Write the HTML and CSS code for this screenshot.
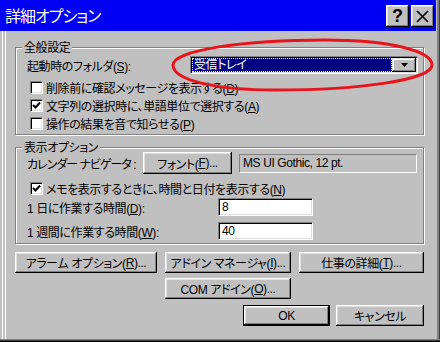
FILE: index.html
```html
<!DOCTYPE html>
<html lang="ja">
<head>
<meta charset="utf-8">
<title>詳細オプション</title>
<link rel="stylesheet" href="styles.css">
</head>
<body>
<div class="window">
  <div class="titlebar">
    <span class="title">詳細オプション</span>
    <div class="tb-buttons">
      <span class="tb-btn help">?</span>
      <span class="tb-btn close"><svg width="13" height="13" viewBox="0 0 13 13"><path d="M1 1 L12 12 M12 1 L1 12" stroke="#000" stroke-width="1.7" fill="none"/></svg></span>
    </div>
  </div>
  <div class="content">
    <div class="group g1">
      <span class="legend">全般設定</span>
      <div class="row folder-row">
        <span class="label w-folder">起動時のフォルダ(<u>S</u>):</span>
        <div class="combo">
          <div class="combo-value"><span class="sel">受信トレイ</span></div>
          <div class="combo-btn"><svg width="7" height="4" viewBox="0 0 7 4"><path d="M0 0 H7 L3.5 4 Z" fill="#000"/></svg></div>
        </div>
      </div>
      <div class="check-row first">
        <span class="cb"></span><span>削除前に確認メッセージを表示する(<u>D</u>)</span>
      </div>
      <div class="check-row">
        <span class="cb"><svg width="9" height="9" viewBox="0 0 9 9"><path d="M1 4 L3.5 6.5 L8 1.5" stroke="#000" stroke-width="2" fill="none"/></svg></span><span>文字列の選択時に、単語単位で選択する(<u>A</u>)</span>
      </div>
      <div class="check-row">
        <span class="cb"></span><span>操作の結果を音で知らせる(<u>P</u>)</span>
      </div>
    </div>

    <div class="group g2">
      <span class="legend">表示オプション</span>
      <div class="row font-row">
        <span class="label w-cal">カレンダー ナビゲータ :</span>
        <span class="btn font-btn">フォント(<u>F</u>)...</span>
        <span class="static-field">MS UI Gothic, 12 pt.</span>
      </div>
      <div class="check-row memo-row">
        <span class="cb"><svg width="9" height="9" viewBox="0 0 9 9"><path d="M1 4 L3.5 6.5 L8 1.5" stroke="#000" stroke-width="2" fill="none"/></svg></span><span>メモを表示するときに、時間と日付を表示する(<u>N</u>)</span>
      </div>
      <div class="row input-row day-row">
        <span class="label w-input">1 日に作業する時間(<u>D</u>):</span>
        <span class="textbox">8</span>
      </div>
      <div class="row input-row week-row">
        <span class="label w-input">1 週間に作業する時間(<u>W</u>):</span>
        <span class="textbox">40</span>
      </div>
    </div>

    <div class="btn-grid">
      <span class="btn">アラーム オプション(<u>R</u>)...</span>
      <span class="btn">アドイン マネージャ(<u>I</u>)...</span>
      <span class="btn">仕事の詳細(<u>T</u>)...</span>
      <span class="btn com-btn">COM アドイン(<u>O</u>)...</span>
    </div>

    <div class="dialog-actions">
      <span class="btn default-btn">OK</span>
      <span class="btn cancel-btn">キャンセル</span>
    </div>
  </div>
  <svg class="annotation" width="440" height="342" viewBox="0 0 440 342">
    <path d="M173 65 C173 50 245 40 325 40 C390 40 432 51 432 65 C432 80 360 90 275 90 C215 90 173 80 173 65 Z" fill="none" stroke="#e8141c" stroke-width="3"/>
  </svg>
</div>
</body>
</html>
```

FILE: styles.css
```css
* { box-sizing: border-box; }

body {
  margin: 0;
  font-family: "Liberation Sans", "Noto Sans CJK JP", sans-serif;
  font-size: 12px;
  font-feature-settings: "palt";
  letter-spacing: -0.4px;
  color: #000;
}

u { text-decoration: underline; text-underline-offset: 1px; }

.window {
  position: relative;
  width: 440px;
  height: 342px;
  background: #c0c0c0;
  display: flex;
  flex-direction: column;
  overflow: hidden;
  box-shadow:
    inset 0 -1px 0 #000,
    inset 0 -2px 0 #404040,
    inset 0 -3px 0 #808080,
    inset -1px 0 0 #404040,
    inset -3px 0 0 #808080,
    inset 2px 0 0 #c0c0c0,
    inset 3px 0 0 #fff,
    inset 5px 0 0 #c0c0c0,
    inset 6px 0 0 #fff;
}

.titlebar {
  height: 31px;
  width: 436px;
  background: #0000f2;
  display: flex;
  align-items: flex-start;
  justify-content: space-between;
  flex-shrink: 0;
}

.title {
  color: #fff;
  font-family: "Noto Sans CJK JP", sans-serif;
  font-size: 16px;
  letter-spacing: -1px;
  line-height: 31px;
  padding-left: 5px;
}

.tb-buttons {
  display: flex;
  gap: 2px;
  margin-top: 5px;
  margin-right: 2px;
}

.tb-btn {
  width: 23px;
  height: 22px;
  background: #c0c0c0;
  display: flex;
  align-items: center;
  justify-content: center;
  box-shadow:
    inset -1px -1px 0 #000,
    inset 1px 1px 0 #fff,
    inset -2px -2px 0 #808080,
    inset 2px 2px 0 #dfdfdf;
}

.tb-btn.help {
  font-family: "Liberation Sans", sans-serif;
  font-weight: bold;
  font-size: 18px;
  letter-spacing: 0;
  line-height: 22px;
}

.content {
  padding: 16px 16px 0 15px;
  display: flex;
  flex-direction: column;
}

.group {
  border: 1px solid #808080;
  box-shadow: inset 1px 1px 0 #fff, 1px 1px 0 #fff;
  display: flex;
  flex-direction: column;
  padding: 0 4px 0 11px;
}

.legend {
  align-self: flex-start;
  background: #c0c0c0;
  line-height: 14px;
  height: 14px;
  padding: 0 2px;
  margin: -8px 0 -6px -5px;
  font-family: "Noto Sans CJK JP", sans-serif;
}

.g1 { padding-bottom: 2px; }
.g2 { margin-top: 12px; padding-bottom: 3px; }

.row {
  display: flex;
  align-items: center;
}

.label {
  white-space: nowrap;
  flex-shrink: 0;
}

.w-folder { width: 163px; }
.w-cal { width: 116px; letter-spacing: -1px; }
.w-input { width: 191px; }

.folder-row { margin-top: 8px; height: 18px; }

.combo {
  width: 228px;
  height: 18px;
  background: #fff;
  border: 1px solid;
  border-color: #808080 #fff #fff #808080;
  box-shadow: inset 1px 1px 0 #000, inset -1px -1px 0 #dfdfdf;
  padding: 1px;
  display: flex;
}

.combo-value {
  flex: 1;
  background: #000080;
  color: #fff;
  outline: 1px dotted #ffff80;
  outline-offset: -1px;
  display: flex;
  align-items: center;
  padding-left: 2px;
  line-height: 14px;
}

.combo-btn {
  width: 24px;
  background: #c0c0c0;
  display: flex;
  align-items: center;
  justify-content: center;
  box-shadow:
    inset -1px -1px 0 #000,
    inset 1px 1px 0 #dfdfdf,
    inset -2px -2px 0 #808080,
    inset 2px 2px 0 #fff;
}

.check-row {
  display: flex;
  align-items: center;
  height: 18px;
  padding-left: 3px;
  white-space: nowrap;
}

.check-row.first { margin-top: 4px; }

.cb {
  width: 13px;
  height: 13px;
  flex-shrink: 0;
  background: #fff;
  border: 1px solid;
  border-color: #808080 #fff #fff #808080;
  box-shadow: inset 1px 1px 0 #000, inset -1px -1px 0 #dfdfdf;
  margin-right: 3px;
  display: flex;
  align-items: center;
  justify-content: center;
}

.font-row { margin-top: 4px; height: 22px; }

.btn {
  background: #c0c0c0;
  display: flex;
  align-items: center;
  justify-content: center;
  height: 21px;
  white-space: nowrap;
  box-shadow:
    inset -1px -1px 0 #000,
    inset 1px 1px 0 #fff,
    inset -2px -2px 0 #808080,
    inset 2px 2px 0 #dfdfdf;
}

.font-btn { width: 89px; height: 22px; }

.static-field {
  margin-left: 7px;
  width: 178px;
  height: 19px;
  border: 1px solid;
  border-color: #808080 #fff #fff #808080;
  display: flex;
  align-items: center;
  padding-left: 3px;
}

.memo-row { margin-top: 5px; }

.input-row { height: 18px; }
.day-row { margin-top: 1px; }
.week-row { margin-top: 6px; }

.textbox {
  width: 95px;
  height: 18px;
  background: #fff;
  border: 1px solid;
  border-color: #808080 #fff #fff #808080;
  box-shadow: inset 1px 1px 0 #000, inset -1px -1px 0 #dfdfdf;
  padding-left: 3px;
  display: flex;
  align-items: center;
}

.btn-grid {
  margin-top: 8px;
  display: grid;
  grid-template-columns: 142px 126px 125px;
  column-gap: 8px;
  row-gap: 5px;
}

.com-btn { grid-column: 2; }

.dialog-actions {
  margin-top: 6px;
  display: flex;
  justify-content: flex-end;
  gap: 6px;
}

.default-btn {
  width: 87px;
  box-shadow:
    inset 0 0 0 1px #000,
    inset -2px -2px 0 #000,
    inset 2px 2px 0 #fff,
    inset -3px -3px 0 #808080,
    inset 3px 3px 0 #dfdfdf;
}

.cancel-btn { width: 88px; }

.annotation {
  position: absolute;
  left: 0;
  top: 0;
  pointer-events: none;
}
```
